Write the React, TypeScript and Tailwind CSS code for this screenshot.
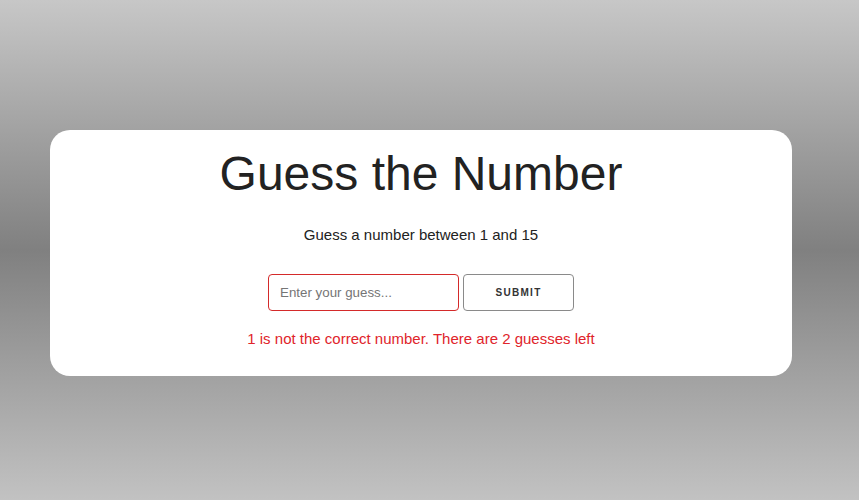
export default function App() {
  return (
    <div
      className="min-h-screen w-full pt-[130px] pl-[50px] bg-[linear-gradient(180deg,#c7c7c7_0%,#808080_50%,#c2c2c2_100%)]"
      style={{ fontFamily: '"Liberation Sans", Arial, sans-serif' }}
    >
      <div className="w-[742px] rounded-[20px] bg-white pt-4 pb-[29px] flex flex-col items-center text-[#222]">
        <h1 className="text-[48px] leading-[56px] font-normal">Guess the Number</h1>
        <p className="mt-6 text-[15px] leading-[17px]">Guess a number between 1 and 15</p>

        {/* guess form */}
        <div className="mt-[31px] flex gap-1">
          <input
            type="text"
            placeholder="Enter your guess..."
            className="w-[191px] h-[37px] rounded-[4px] border border-[#d42a2a] px-[11px] text-[13.333px] text-[#222] placeholder:text-[#757575] outline-none"
          />
          <button className="w-[111px] h-[37px] rounded-[4px] border border-[#8a8a8a] bg-white text-[10px] font-bold tracking-[1.3px] text-[#333]">
            SUBMIT
          </button>
        </div>

        <p className="mt-[19px] text-[15px] leading-[17px] text-[#e0242b]">
          1 is not the correct number. There are 2 guesses left
        </p>
      </div>
    </div>
  )
}
